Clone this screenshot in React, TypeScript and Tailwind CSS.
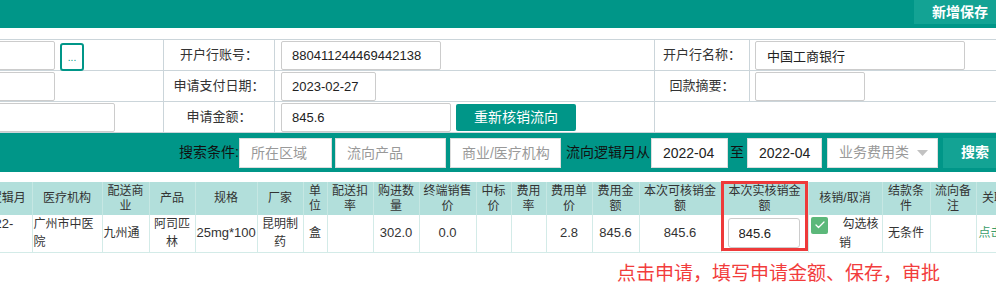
import { Check } from "lucide-react";

const cols = [
  { w: "w-[72px]", label: "流向逻辑月" },
  { w: "w-[70px]", label: "医疗机构" },
  { w: "w-[47px]", label: "配送商业" },
  { w: "w-[46px]", label: "产品" },
  { w: "w-[62px]", label: "规格" },
  { w: "w-[46px]", label: "厂家" },
  { w: "w-[24px]", label: "单位" },
  { w: "w-[46px]", label: "配送扣率" },
  { w: "w-[46px]", label: "购进数量" },
  { w: "w-[57px]", label: "终端销售价" },
  { w: "w-[35px]", label: "中标价" },
  { w: "w-[35px]", label: "费用率" },
  { w: "w-[46px]", label: "费用单价" },
  { w: "w-[47px]", label: "费用金额" },
  { w: "w-[82px]", label: "本次可核销金额" },
  { w: "w-[87px]", label: "本次实核销金额" },
  { w: "w-[74px]", label: "核销/取消" },
  { w: "w-[48px]", label: "结款条件" },
  { w: "w-[46px]", label: "流向备注" },
  { w: "w-[60px]", label: "关联单据" },
];

const td = "border-r border-b border-[#d3ebe8] px-px text-center align-middle";
const num = "text-[13px]";

function Field({ className, value }: { className: string; value?: string }) {
  return (
    <input
      readOnly
      value={value ?? ""}
      className={`h-[29px] rounded-[2px] border border-[#cccccc] bg-white pl-[10px] text-[13px] text-[#222] outline-none ${className}`}
    />
  );
}

export default function App() {
  return (
    <div className="h-[294px] w-[996px] overflow-hidden bg-white font-['Liberation_Sans','Noto_Sans_CJK_SC',sans-serif] text-[#333]">
      {/* 顶部操作栏 */}
      <div className="flex h-[28px] justify-end bg-[#009688]">
        <button className="-mr-[10px] h-[24px] w-[92px] shrink-0 bg-[#13a394] text-[14px] font-bold text-white">新增保存</button>
      </div>

      {/* 表单 */}
      <div className="mt-[11px] grid grid-cols-[164px_111px_380px_95px_246px] border-t border-[#cbd5da] text-[13px]">
        {/* row 1 */}
        <div className="flex h-[31px] items-center border-r border-b border-[#cbd5da]">
          <Field className="-ml-[10px] w-[65px]" />
          <button className="ml-[5px] mt-[4px] flex h-[28px] w-[24px] shrink-0 items-end justify-center rounded-[3px] border-2 border-[#009688] pb-[6px] text-[10px] leading-none text-[#009688]">...</button>
        </div>
        <div className="flex h-[31px] items-center justify-center border-r border-b border-[#cbd5da]">开户行账号：</div>
        <div className="flex h-[31px] items-center border-r border-b border-[#cbd5da] pl-[6px]">
          <Field className="w-[160px]" value="880411244469442138" />
        </div>
        <div className="flex h-[31px] items-center justify-center border-r border-b border-[#cbd5da]">开户行名称：</div>
        <div className="flex h-[31px] items-center border-b border-[#cbd5da] pl-[5px]">
          <Field className="w-[210px] pl-[11px]" value="中国工商银行" />
        </div>

        {/* row 2 */}
        <div className="flex h-[31px] items-center border-r border-b border-[#cbd5da]">
          <Field className="-ml-[10px] w-[65px]" />
        </div>
        <div className="flex h-[31px] items-center justify-center border-r border-b border-[#cbd5da]">申请支付日期：</div>
        <div className="flex h-[31px] items-center border-r border-b border-[#cbd5da] pl-[6px]">
          <Field className="w-[95px]" value="2023-02-27" />
        </div>
        <div className="flex h-[31px] items-center justify-center border-r border-b border-[#cbd5da]">回款摘要：</div>
        <div className="flex h-[31px] items-center border-b border-[#cbd5da] pl-[5px]">
          <Field className="w-[110px]" />
        </div>

        {/* row 3 */}
        <div className="flex h-[31px] items-center border-r border-b border-[#cbd5da]">
          <Field className="-ml-[10px] w-[125px]" />
        </div>
        <div className="flex h-[31px] items-center justify-center border-r border-b border-[#cbd5da]">申请金额：</div>
        <div className="flex h-[31px] items-center border-r border-b border-[#cbd5da] pl-[6px]">
          <Field className="w-[170px]" value="845.6" />
          <button className="ml-[5px] h-[27px] w-[120px] rounded-[2px] bg-[#009688] text-[14px] text-white">重新核销流向</button>
        </div>
        <div className="col-span-2 h-[31px] border-b border-[#cbd5da]" />
      </div>

      {/* 搜索条件 */}
      <div className="flex h-[39px] items-center bg-[#009688] pl-[179px] text-[14px] text-[#111]">
        <span className="shrink-0">搜索条件:</span>
        <input readOnly placeholder="所在区域" className="h-[30px] w-[93px] shrink-0 border border-[#dddddd] bg-white pl-[11px] outline-none placeholder:text-[#999]" />
        <input readOnly placeholder="流向产品" className="ml-[3px] h-[30px] w-[111px] shrink-0 border border-[#dddddd] bg-white pl-[11px] outline-none placeholder:text-[#999]" />
        <input readOnly placeholder="商业/医疗机构" className="ml-[4px] h-[30px] w-[111px] shrink-0 border border-[#dddddd] bg-white pl-[11px] outline-none placeholder:text-[#999]" />
        <span className="ml-[5px] shrink-0">流向逻辑月从</span>
        <input readOnly value="2022-04" className="ml-[1px] h-[30px] w-[77px] shrink-0 border border-[#dddddd] bg-white pl-[11px] text-[#222] outline-none" />
        <span className="ml-[2px] shrink-0">至</span>
        <input readOnly value="2022-04" className="ml-[3px] h-[30px] w-[75px] shrink-0 border border-[#dddddd] bg-white pl-[11px] text-[#222] outline-none" />
        <div className="ml-[5px] flex h-[30px] w-[111px] shrink-0 items-center justify-between border border-[#dddddd] bg-white pl-[11px] pr-[9px] text-[#999]">
          <span>业务费用类</span>
          <svg width="11" height="6" viewBox="0 0 11 6">
            <polygon points="0,0 11,0 5.5,6" fill="#c2c2c2" />
          </svg>
        </div>
        <button className="ml-[5px] h-[30px] w-[64px] shrink-0 bg-[#13a394] font-bold text-white">搜索</button>
      </div>

      {/* 流向列表 */}
      <div className="relative mt-[10px]">
        <div className="overflow-hidden">
          <table className="-ml-[40px] w-[1076px] table-fixed border-collapse">
            <colgroup>
              {cols.map((c) => (
                <col key={c.label} className={c.w} />
              ))}
            </colgroup>
            <thead>
              <tr className="h-[33px] bg-[#b2dfdb]">
                {cols.map((c) => (
                  <th key={c.label} className="border-r border-[#c6e7e3] px-[3px] text-center align-middle text-[12px] font-normal leading-[15px] text-[#333]">
                    {c.label}
                  </th>
                ))}
              </tr>
            </thead>
            <tbody>
              <tr className="h-[36px] text-[12px] leading-[18px]">
                <td className={`${td} !pl-[20px] !text-left`}>
                  <span className={num}>2022-<br />04</span>
                </td>
                <td className={`${td} !text-left`}>广州市中医院</td>
                <td className={`${td} !text-left`}>九州通</td>
                <td className={td}>阿司匹林</td>
                <td className={td}><span className={num}>25mg*100</span></td>
                <td className={td}>昆明制药</td>
                <td className={td}>盒</td>
                <td className={td} />
                <td className={td}><span className={num}>302.0</span></td>
                <td className={td}><span className={num}>0.0</span></td>
                <td className={td} />
                <td className={td} />
                <td className={td}><span className={num}>2.8</span></td>
                <td className={td}><span className={num}>845.6</span></td>
                <td className={td}><span className={num}>845.6</span></td>
                <td className={td}>
                  <input readOnly value="845.6" className="ml-[5px] block h-[30px] w-[72px] rounded-[3px] border border-[#cccccc] bg-white pl-[10px] text-[13px] text-[#222] outline-none" />
                </td>
                <td className={td}>
                  <span className="mr-[14px] inline-flex h-[17px] w-[17px] items-center justify-center rounded-[2px] bg-[#5cb87a] align-[-3px]">
                    <Check size={12} strokeWidth={2.5} color="#ffffff" />
                  </span>
                  勾选核销
                </td>
                <td className={td}>无条件</td>
                <td className={td} />
                <td className={`${td} !pl-[2px] !text-left text-[#3a9d6b]`}>点击查看</td>
              </tr>
            </tbody>
          </table>
        </div>
        <div className="pointer-events-none absolute -top-px left-[721px] h-[70px] w-[87px] border-[3px] border-[#ee3a3a]" />
      </div>

      <div className="pl-[617px] pt-[10px] text-[19px] leading-[22px] text-[#f23c3c]">点击申请，填写申请金额、保存，审批</div>
    </div>
  );
}
